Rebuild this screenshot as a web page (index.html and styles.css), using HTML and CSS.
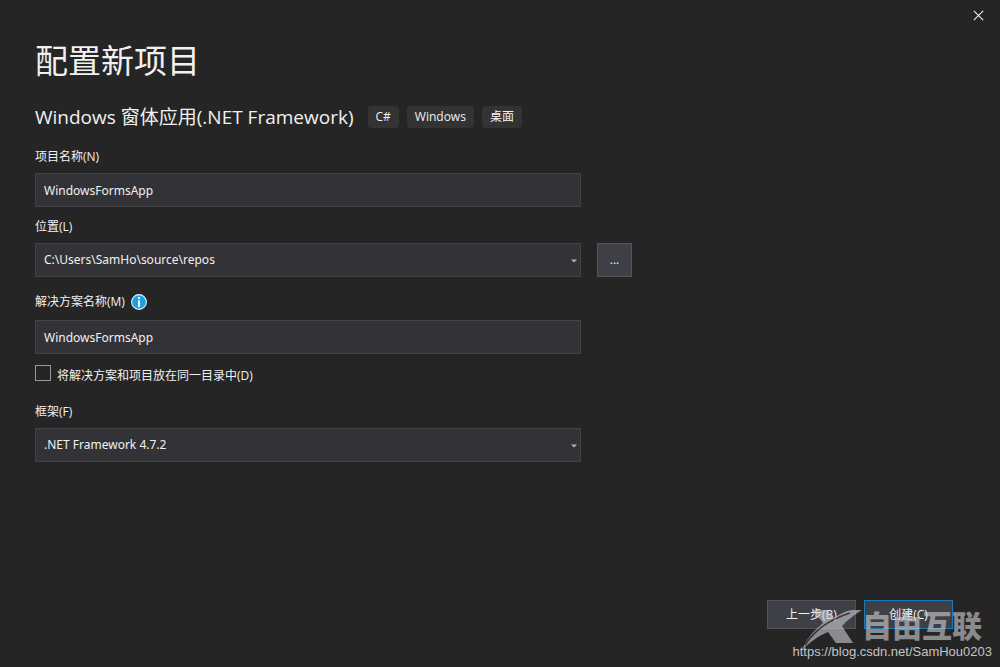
FILE: index.html
```html
<!DOCTYPE html>
<html lang="zh-CN">
<head>
<meta charset="utf-8">
<meta name="viewport" content="width=device-width, initial-scale=1">
<title>配置新项目</title>
<link rel="stylesheet" href="styles.css">
</head>
<body>
<div class="dialog">
  <header class="titlebar">
    <button class="close" type="button" aria-label="关闭">
      <svg width="11" height="11" viewBox="0 0 11 11" aria-hidden="true"><path d="M.8.8l9.4 9.4M10.2.8L.8 10.2" fill="none" stroke="currentColor" stroke-width="1.1"/></svg>
    </button>
  </header>
  <main class="content">
    <h1 class="title">配置新项目</h1>
    <div class="template">
      <h2 class="template-name">Windows 窗体应用(.NET Framework)</h2>
      <ul class="tags">
        <li class="tag">C#</li>
        <li class="tag">Windows</li>
        <li class="tag">桌面</li>
      </ul>
    </div>
    <form class="form" id="project-form">
      <div class="field">
        <label class="label" for="name">项目名称(N)</label>
        <input class="control" id="name" type="text" value="WindowsFormsApp">
      </div>
      <div class="field">
        <label class="label" for="location">位置(L)</label>
        <div class="select-box">
          <select class="control" id="location"><option>C:\Users\SamHo\source\repos</option></select>
          <svg class="arrow" width="6" height="4" viewBox="0 0 6 4" aria-hidden="true"><path d="M0 .5h6L3 3.5z" fill="currentColor"/></svg>
        </div>
        <button class="button browse" type="button">...</button>
      </div>
      <div class="field field-solution">
        <div class="label-row">
          <label class="label" for="solution">解决方案名称(M)</label>
          <svg class="info" width="16" height="16" viewBox="0 0 16 16" aria-hidden="true"><circle cx="8" cy="8" r="7.4" fill="#1ba1e2" stroke="#e8f4fb" stroke-width="1.1"/><path d="M7 3h2v2H7zM7 6.3h2V13H7z" fill="#fff"/></svg>
        </div>
        <input class="control" id="solution" type="text" value="WindowsFormsApp">
      </div>
      <div class="check-row">
        <input class="checkbox" id="same-dir" type="checkbox">
        <label class="label" for="same-dir">将解决方案和项目放在同一目录中(D)</label>
      </div>
      <div class="field field-framework">
        <label class="label" for="framework">框架(F)</label>
        <div class="select-box">
          <select class="control" id="framework"><option>.NET Framework 4.7.2</option></select>
          <svg class="arrow" width="6" height="4" viewBox="0 0 6 4" aria-hidden="true"><path d="M0 .5h6L3 3.5z" fill="currentColor"/></svg>
        </div>
      </div>
    </form>
  </main>
  <footer class="actions">
    <button class="button action" type="button">上一步(B)</button>
    <button class="button action primary" type="submit" form="project-form">创建(C)</button>
  </footer>
  <div class="watermark">
    <div class="brand">
      <svg class="brand-mark" width="62" height="44" viewBox="0 0 62 44" aria-hidden="true">
        <path d="M13 3h15l6 8C40 7 47 3 53 3h9C54 8 47 13 42 19l11 17H36l-8-11C18 29 9 36 2 43 5 35 11 26 20 19L23 16z" fill="currentColor"/>
        <path d="M5 38C14 24 28 13 50 6" fill="none" stroke="#333338" stroke-width="1.4"/>
      </svg>
      <span class="brand-name">自由互联</span>
    </div>
    <span class="source">https://blog.csdn.net/SamHou0203</span>
  </div>
</div>
</body>
</html>
```
FILE: styles.css
```css
* {
  box-sizing: border-box;
}

body {
  margin: 0;
  background: #252526;
  color: #f1f1f1;
  font: 12px/18px "Open Sans", "Noto Sans CJK SC", sans-serif;
}

button,
input,
select {
  margin: 0;
  color: inherit;
  font: inherit;
}

.dialog {
  position: relative;
  display: flex;
  flex-direction: column;
  min-height: 100vh;
}

.titlebar {
  display: flex;
  justify-content: flex-end;
  padding: 4px 11px 0;
}

.close {
  display: grid;
  place-items: center;
  width: 22px;
  height: 22px;
  padding: 0;
  border: 0;
  background: none;
}

.content {
  flex: 1;
  padding: 10px 35px 0;
}

.title {
  margin: 0;
  font-size: 33px;
  line-height: 50px;
  font-weight: 400;
}

.template {
  display: flex;
  flex-wrap: wrap;
  align-items: center;
  gap: 14px;
  margin: 20px 0;
}

.template-name {
  margin: 0;
  font-size: 19px;
  line-height: 22px;
  font-weight: 400;
}

.tags {
  display: flex;
  gap: 8px;
  margin: 0;
  padding: 0;
  list-style: none;
}

.tag {
  padding: 2px 8px;
  border-radius: 4px;
  background: #333334;
}

.form {
  display: flex;
  flex-direction: column;
  gap: 11px;
  max-width: 597px;
}

.field {
  display: grid;
  grid-template-columns: minmax(0, 1fr) 35px;
  gap: 7px 16px;
}

.field > .label,
.label-row {
  grid-column: 1 / -1;
}

.field-solution {
  margin-top: 5px;
}

.field-framework {
  margin-top: 7px;
}

.label-row {
  display: flex;
  align-items: center;
  gap: 6px;
  padding-bottom: 2px;
}

.control {
  width: 100%;
  height: 34px;
  padding: 0 8px;
  border: 1px solid #434346;
  border-radius: 0;
  background: #333337;
  font-family: "Noto Sans", "Noto Sans CJK SC", sans-serif;
  appearance: none;
}

.select-box {
  position: relative;
}

.select-box .control {
  display: block;
}

.arrow {
  position: absolute;
  top: 50%;
  right: 4px;
  margin-top: -1px;
  color: #b4b4b4;
  pointer-events: none;
}

.button {
  padding: 0;
  border: 1px solid #555558;
  background: #3f3f46;
}

.check-row {
  display: flex;
  align-items: flex-start;
  gap: 6px;
}

.check-row .label {
  padding-top: 2px;
}

.checkbox {
  width: 16px;
  height: 16px;
  border: 1px solid #999999;
  background: #252526;
  appearance: none;
}

.checkbox:checked {
  background: #1ba1e2;
}

.actions {
  display: flex;
  justify-content: flex-end;
  gap: 8px;
  padding: 0 47px 38px;
}

.action {
  width: 89px;
  height: 29px;
}

.primary {
  border-color: #1c7ab8;
}

.watermark {
  position: absolute;
  right: 8px;
  bottom: 6px;
  display: flex;
  flex-direction: column;
  align-items: flex-end;
  pointer-events: none;
}

.brand {
  display: flex;
  align-items: flex-start;
  height: 36px;
  padding-right: 10px;
  color: #d0d0d2;
  opacity: 0.6;
}

.brand-name {
  padding-top: 1px;
  font-size: 30px;
  line-height: 36px;
  font-weight: 900;
}

.source {
  color: #c4c4c4;
  font: 13px/18px "Liberation Sans", sans-serif;
}
```
